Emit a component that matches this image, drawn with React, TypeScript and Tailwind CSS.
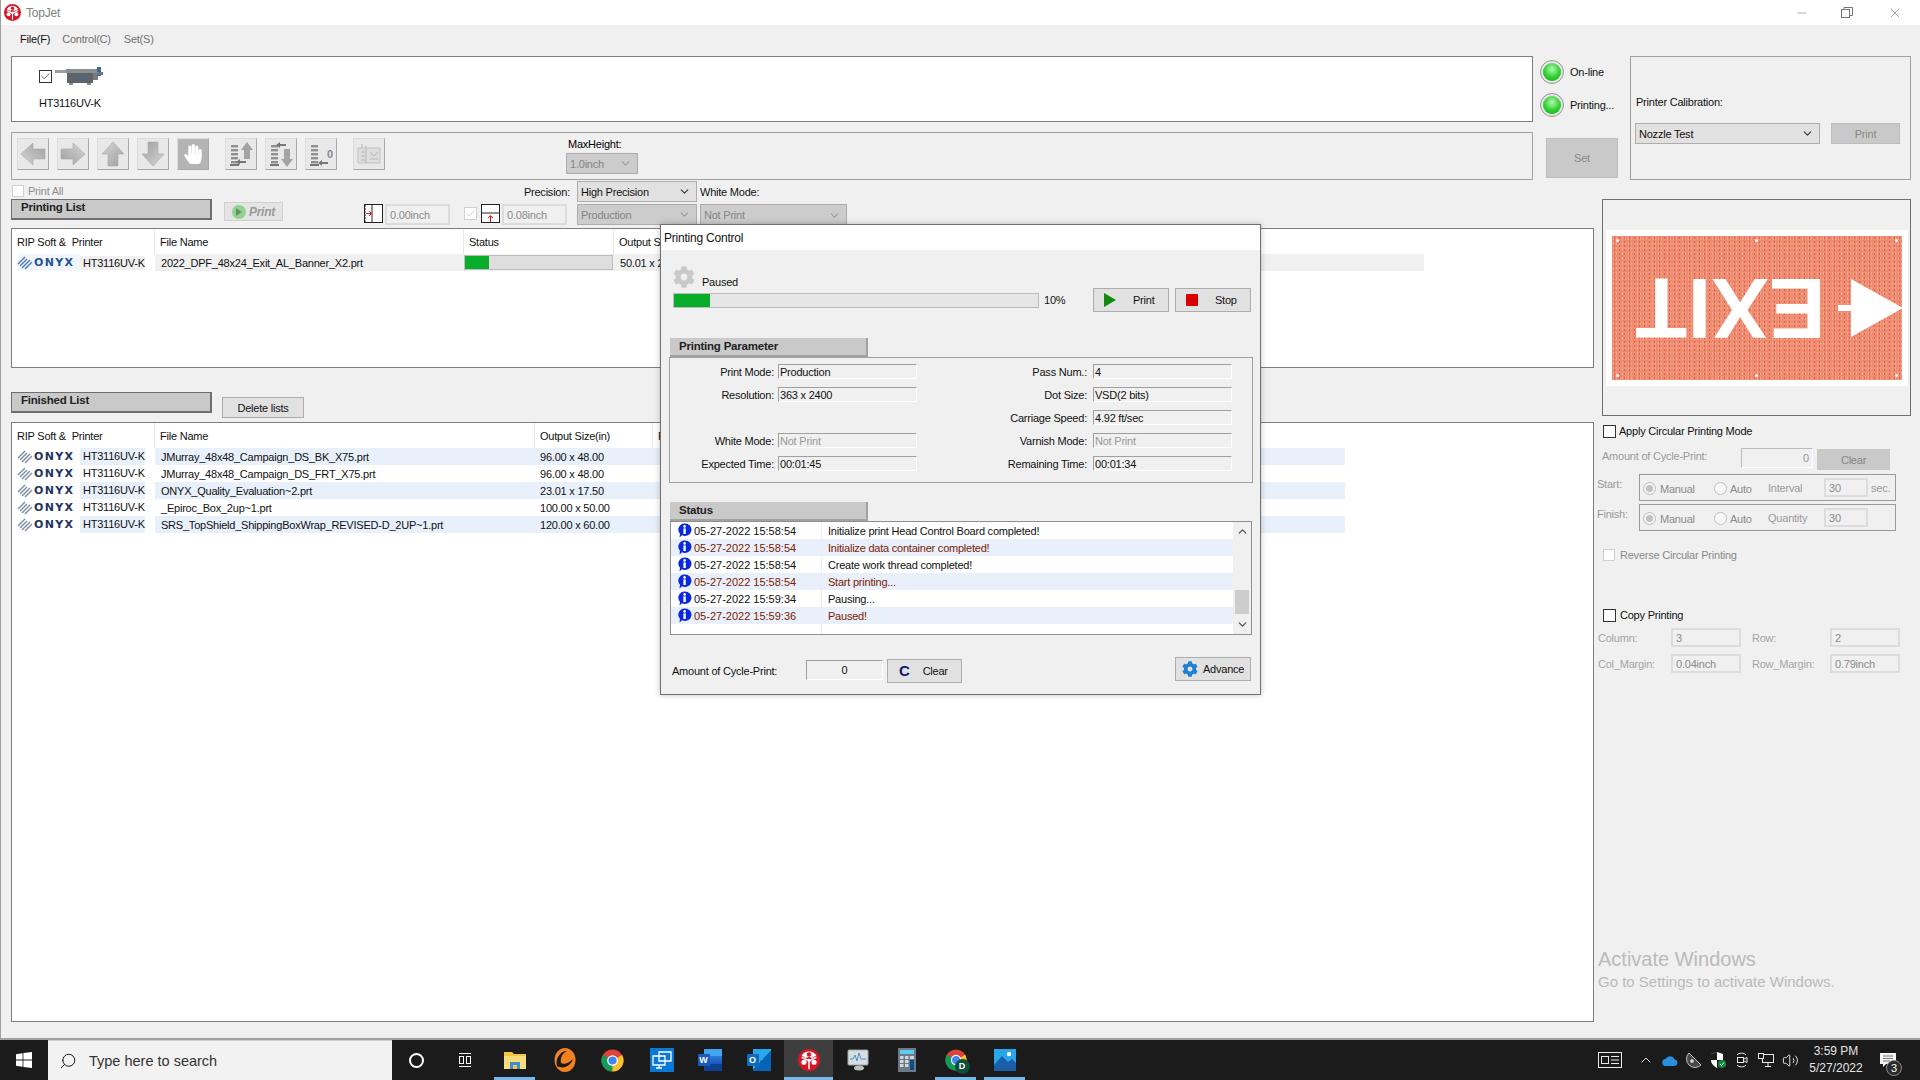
import type { ReactNode } from 'react'
import { ChevronDown, ChevronUp, Search, Minus, X, Check, Volume2 } from 'lucide-react'
import { FaCog, FaHandPaper } from 'react-icons/fa'

const finishedRows = [
  ['JMurray_48x48_Campaign_DS_BK_X75.prt', '96.00 x 48.00'],
  ['JMurray_48x48_Campaign_DS_FRT_X75.prt', '96.00 x 48.00'],
  ['ONYX_Quality_Evaluation~2.prt', '23.01 x 17.50'],
  ['_Epiroc_Box_2up~1.prt', '100.00 x 50.00'],
  ['SRS_TopShield_ShippingBoxWrap_REVISED-D_2UP~1.prt', '120.00 x 60.00'],
]

const logRows = [
  ['05-27-2022 15:58:54', 'Initialize print Head Control Board completed!'],
  ['05-27-2022 15:58:54', 'Initialize data container completed!'],
  ['05-27-2022 15:58:54', 'Create work thread completed!'],
  ['05-27-2022 15:58:54', 'Start printing...'],
  ['05-27-2022 15:59:34', 'Pausing...'],
  ['05-27-2022 15:59:36', 'Paused!'],
]

function TopJetLogo({ size }: { size: number }) {
  return (
    <svg width={size} height={size} viewBox="0 0 24 24">
      <circle cx="12" cy="12" r="12" fill="#dc1428" />
      <path d="M4 7 A9.5 9.5 0 0 1 20 7 L15 10 A4 4 0 0 0 9 10 Z" fill="#fff" />
      <path d="M12 13 L12 22 M12 13 L4 9 M12 13 L20 9" stroke="#fff" strokeWidth="1.6" />
      <circle cx="6.5" cy="14.5" r="2.8" fill="#fff" />
      <circle cx="17.5" cy="14.5" r="2.8" fill="#fff" />
      <circle cx="12" cy="6" r="2.4" fill="#dc1428" />
      <circle cx="12" cy="12.5" r="1.8" fill="#fff" />
    </svg>
  )
}

function Checkbox({ checked, disabled, size = 13 }: { checked?: boolean; disabled?: boolean; size?: number }) {
  return (
    <span
      style={{ width: size, height: size }}
      className={`flex shrink-0 items-center justify-center border bg-white ${disabled ? 'border-[#d0d0d0] bg-[#f4f4f4]' : 'border-[#333]'}`}
    >
      {checked && <Check size={size - 2} strokeWidth={1.5} className={disabled ? 'text-[#bbb]' : 'text-[#222]'} />}
    </span>
  )
}

function Radio() {
  return (
    <span className="flex h-[13px] w-[13px] shrink-0 items-center justify-center rounded-full border border-[#bcbcbc] bg-[#f4f4f4]">
      <span className="h-[7px] w-[7px] rounded-full bg-[#c0c0c0]" />
    </span>
  )
}

function Combo({ text, className, disabled }: { text: string; className: string; disabled?: boolean }) {
  return (
    <div className={`flex items-center justify-between border border-[#adadad] pl-[3px] pr-[5px] ${disabled ? 'bg-[#cccccc] text-[#858585]' : 'bg-[#e1e1e1] text-[#111]'} ${className}`}>
      <span>{text}</span>
      <ChevronDown size={13} className={disabled ? 'text-[#9a9a9a]' : 'text-[#333]'} />
    </div>
  )
}

function DisabledField({ text, className }: { text: string; className: string }) {
  return (
    <div className={`flex items-center border-2 border-[#dcdcdc] bg-[#f0f0f0] pl-[3px] text-[#8a8a8a] ${className}`}>{text}</div>
  )
}

function TabHeader({ text, className }: { text: string; className: string }) {
  return (
    <div className={`border-b-2 border-r-2 border-[#a2a2a2] bg-[#c9c9c9] pl-[9px] text-[11.5px] font-bold text-[#222] ${className}`}>
      {text}
    </div>
  )
}

function ListTab({ text }: { text: string }) {
  return (
    <div className="h-[21px] w-[201px] border border-b-2 border-r-2 border-[#6e6e6e] bg-[#c9c9c9] pl-[9px] text-[11.5px] font-bold text-[#222]">
      {text}
    </div>
  )
}

function OnyxLogo({ selected }: { selected?: boolean }) {
  return (
    <div className={`flex h-[17px] w-[63px] shrink-0 items-center ${selected ? "bg-[radial-gradient(#ffffff_0.7px,#3d86e4_0.8px)] bg-[length:2px_2px]" : ''}`}>
      <svg width="16" height="15" viewBox="0 0 16 15" className="shrink-0">
        <path d="M1 9 L8 2 M3 11 L10 4 M5 13 L13 5 M8 14 L15 7" stroke={selected ? '#4a78c0' : '#7d8aa5'} strokeWidth="1.4" />
      </svg>
      <span className={`ml-[1px] font-['DejaVu_Sans',sans-serif] text-[11px] font-bold leading-none tracking-[1.3px] ${selected ? 'text-[#25539c]' : 'text-[#1f3560]'}`}>ONYX</span>
    </div>
  )
}

function HeaderCell({ text, width }: { text: string; width: string }) {
  return <div className={`flex h-full shrink-0 items-center border-r border-[#e8e8e8] pl-[5px] ${width}`}>{text}</div>
}

// gray toolbar arrows, drawn pointing up and rotated per button
function ArrowIcon({ rotate, id }: { rotate: number; id: string }) {
  return (
    <svg width="28" height="26" viewBox="0 0 28 26" style={{ transform: `rotate(${rotate}deg)` }}>
      <defs>
        <linearGradient id={id} x1="0" x2="1" y1="0" y2="1">
          <stop offset="0" stopColor="#d6d6d6" />
          <stop offset="1" stopColor="#9e9e9e" />
        </linearGradient>
      </defs>
      <path d="M14 1 L25 13 L19 13 L19 25 L9 25 L9 13 L3 13 Z" fill={`url(#${id})`} stroke="#a8a8a8" strokeWidth="0.6" />
    </svg>
  )
}

function StackIcon({ kind }: { kind: 'up' | 'down' | 'zero' }) {
  return (
    <svg width="28" height="28" viewBox="0 0 28 28">
      {[5, 9, 13, 17, 21].map(y => (
        <rect key={y} x="4" y={y} width="7" height="2.4" fill="#8f8f8f" />
      ))}
      <rect x="3" y="24" width="9" height="2" fill="#777" />
      {kind === 'up' && (
        <>
          <path d="M20 2 L26 10 L23 10 L23 19 L17 19 L17 10 L14 10 Z" fill="#a4a4a4" />
          <path d="M9 22 L13 19 L13 21 L19 21 L19 23 L13 23 L13 25 Z" fill="#777" />
        </>
      )}
      {kind === 'down' && (
        <>
          <path d="M20 27 L26 19 L23 19 L23 9 L17 9 L17 19 L14 19 Z" fill="#a4a4a4" />
          <path d="M9 5 L13 2 L13 4 L19 4 L19 6 L13 6 L13 8 Z" fill="#777" />
        </>
      )}
      {kind === 'zero' && <path d="M11 23 L15 20 L15 22 L21 22 L21 24 L15 24 L15 26 Z" fill="#777" />}
      {kind === 'zero' && <text x="20" y="18" fontSize="11" fontWeight="700" fill="#8a8a8a">0</text>}
    </svg>
  )
}

function ToolButton({ children, className = '' }: { children: ReactNode; className?: string }) {
  return (
    <div className={`flex h-[32px] w-[32px] shrink-0 items-center justify-center border border-b-[#a9a9a9] border-l-[#dcdcdc] border-r-[#a9a9a9] border-t-[#dcdcdc] bg-[#e8e8e8] ${className}`}>
      {children}
    </div>
  )
}

function TitleBar() {
  return (
    <div className="flex h-[25px] shrink-0 items-center bg-white pl-[3px] text-[12px] text-[#808080]">
      <TopJetLogo size={17} />
      <span className="ml-[5px]">TopJet</span>
      <div className="ml-auto flex items-center text-[#767676]">
        <Minus size={14} strokeWidth={1} className="mr-[32px]" />
        <svg width="12" height="11" viewBox="0 0 12 11" className="mr-[34px]" fill="none" stroke="#767676">
          <rect x="0.5" y="2.5" width="8" height="8" />
          <path d="M3 2.5 V0.5 H11.5 V8.5 H8.5" />
        </svg>
        <X size={16} strokeWidth={1} className="mr-[17px]" />
      </div>
    </div>
  )
}

function PrinterIcon() {
  return (
    <svg width="48" height="18" viewBox="0 0 48 18">
      <rect x="0" y="3" width="14" height="3" fill="#9aa0a6" />
      <rect x="11" y="2" width="32" height="4" fill="#8a8f94" />
      <rect x="12" y="6" width="26" height="10" fill="#5f6468" />
      <rect x="22" y="11" width="8" height="1.5" fill="#3f6a96" />
      <rect x="38" y="6" width="5" height="7" fill="#777c80" />
      <rect x="42" y="0" width="4" height="9" fill="#3f6a96" />
      <rect x="42" y="5" width="6" height="3" fill="#70757a" />
      <rect x="14" y="16" width="4" height="2" fill="#888" />
      <rect x="32" y="16" width="4" height="2" fill="#888" />
    </svg>
  )
}

function Led() {
  return (
    <span className="flex h-[24px] w-[24px] items-center justify-center rounded-full border border-[#9a9a9a] bg-[#e4e4e4]">
      <span className="h-[18px] w-[18px] rounded-full bg-[radial-gradient(circle_at_50%_35%,#b4f7b4,#2cd02c_55%,#0f9f0f)]" />
    </span>
  )
}

function TopSection() {
  return (
    <div className="flex h-[124px] shrink-0 pl-[10px]">
      <div className="flex w-[1522px] shrink-0 flex-col">
        <div className="h-[66px] border border-[#7d7d85] bg-white pl-[27px] pt-[10px] text-[#111]">
          <div className="flex items-center">
            <Checkbox checked />
            <span className="ml-[3px]"><PrinterIcon /></span>
          </div>
          <div className="mt-[11px]">HT3116UV-K</div>
        </div>
        <div className="mt-[10px] flex h-[48px] border border-[#a0a0a0] pl-[5px] pt-[5px]">
          <div className="flex gap-[8px]">
            <ToolButton><ArrowIcon rotate={-90} id="a1" /></ToolButton>
            <ToolButton><ArrowIcon rotate={90} id="a2" /></ToolButton>
            <ToolButton><ArrowIcon rotate={0} id="a3" /></ToolButton>
            <ToolButton><ArrowIcon rotate={180} id="a4" /></ToolButton>
            <ToolButton className="!bg-[#b4b4b4]"><FaHandPaper size={20} className="text-white" /></ToolButton>
          </div>
          <div className="ml-[16px] flex gap-[8px]">
            <ToolButton><StackIcon kind="up" /></ToolButton>
            <ToolButton><StackIcon kind="down" /></ToolButton>
            <ToolButton><StackIcon kind="zero" /></ToolButton>
          </div>
          <ToolButton className="ml-[16px]">
            <svg width="26" height="24" viewBox="0 0 26 24" fill="none" stroke="#c2c2c2">
              <path d="M2 6 H24 V21 H2 Z" fill="#dedede" />
              <path d="M6 2 V6 M10 4 V21 M5 10 H9 M5 14 H9 M5 18 H9 M14 10 L18 14 L22 10 M14 17 H22" strokeWidth="1.4" />
            </svg>
          </ToolButton>
          <div className="ml-[181px] flex flex-col">
            <span className="ml-[2px] leading-[13px]">MaxHeight:</span>
            <Combo text="1.0inch" disabled className="mt-[2px] h-[21px] w-[72px]" />
          </div>
        </div>
      </div>

      <div className="ml-[7px] flex w-[90px] shrink-0 flex-col text-[#111]">
        <div className="mt-[4px] flex items-center">
          <Led />
          <span className="ml-[6px]">On-line</span>
        </div>
        <div className="mt-[9px] flex items-center">
          <Led />
          <span className="ml-[6px]">Printing...</span>
        </div>
        <div className="ml-[6px] mt-[21px] flex h-[40px] w-[72px] items-center justify-center border border-[#bdbdbd] bg-[#c9c9c9] text-[#8a8a8a]">Set</div>
      </div>

      <div className="flex h-[124px] w-[281px] shrink-0 flex-col border border-[#a0a0a0] pl-[4px]">
        <div className="ml-[1px] mt-[39px] leading-[13px] text-[#111]">Printer Calibration:</div>
        <div className="mt-[14px] flex items-start">
          <Combo text="Nozzle Test" className="h-[21px] w-[185px]" />
          <div className="ml-[11px] flex h-[21px] w-[69px] items-center justify-center border border-[#bdbdbd] bg-[#c9c9c9] text-[#8a8a8a]">Print</div>
        </div>
      </div>
    </div>
  )
}

function ControlStrip() {
  return (
    <div className="flex h-[48px] shrink-0">
      <div className="flex w-[201px] shrink-0 flex-col">
        <div className="ml-[1px] mt-[5px] flex h-[12px] items-center text-[#8d8d8d]">
          <Checkbox disabled size={12} />
          <span className="ml-[4px]">Print All</span>
        </div>
        <div className="mt-[2px]"><ListTab text="Printing List" /></div>
      </div>

      <div className="ml-[12px] mt-[22px] flex h-[19px] w-[59px] shrink-0 items-center justify-center border border-[#cfcfcf] bg-[#e4e4e4] text-[#9a9a9a]">
        <span className="flex h-[14px] w-[14px] items-center justify-center rounded-full bg-[#8fd38f]">
          <span className="ml-[1px] h-0 w-0 border-y-[4px] border-l-[6px] border-y-transparent border-l-[#6a8f6a]" />
        </span>
        <span className="ml-[3px] text-[12px] font-bold italic">Print</span>
      </div>

      <div className="ml-[81px] mt-[1px] flex w-[333px] shrink-0 flex-col">
        <div className="flex h-[21px] items-center justify-end">
          <span className="text-[#111]">Precision:</span>
          <Combo text="High Precision" className="ml-[7px] h-[21px] w-[120px]" />
        </div>
        <div className="mt-[2px] flex h-[21px] items-start">
          <svg width="19" height="20" viewBox="0 0 19 20" className="shrink-0">
            <rect x="0.5" y="0.5" width="18" height="18" fill="#fff" stroke="#222" />
            <path d="M8 1 V19" stroke="#222" />
            <path d="M1 1 V19" stroke="#222" strokeDasharray="2 1" />
            <path d="M2 9.5 H7 M5 7 L7.5 9.5 L5 12" stroke="#e01414" fill="none" />
          </svg>
          <DisabledField text="0.00inch" className="ml-[2px] h-[21px] w-[65px]" />
          <span className="ml-[14px] mt-[3px]"><Checkbox checked disabled /></span>
          <svg width="19" height="20" viewBox="0 0 19 20" className="ml-[4px] shrink-0">
            <rect x="0.5" y="0.5" width="18" height="18" fill="#fff" stroke="#222" />
            <path d="M1 9 H18" stroke="#222" />
            <path d="M9.5 18 V12 M7 14 L9.5 11.5 L12 14" stroke="#e01414" fill="none" />
          </svg>
          <DisabledField text="0.08inch" className="ml-[2px] h-[21px] w-[65px]" />
          <Combo text="Production" disabled className="ml-[10px] h-[21px] w-[120px]" />
        </div>
      </div>

      <div className="ml-[3px] mt-[1px] flex w-[147px] shrink-0 flex-col">
        <span className="flex h-[21px] items-center text-[#111]">White Mode:</span>
        <Combo text="Not Print" disabled className="mt-[2px] h-[22px] w-[147px]" />
      </div>
    </div>
  )
}

function PrintingTable() {
  return (
    <div className="h-[140px] w-[1583px] shrink-0 border border-[#7d7d85] bg-white text-[#111]">
      <div className="flex h-[25px] items-center">
        <HeaderCell text={'RIP Soft &\u00a0 Printer'} width="w-[143px]" />
        <HeaderCell text="File Name" width="w-[309px]" />
        <HeaderCell text="Status" width="w-[150px]" />
        <div className="pl-[5px]">Output Size(in)</div>
      </div>
      <div className="flex h-[17px] w-[1412px] items-center bg-[#f0f0f0]">
        <div className="flex w-[143px] shrink-0 items-center bg-white pl-[5px]">
          <OnyxLogo selected />
          <span className="bg-[#f0f0f0] pl-[3px]">HT3116UV-K</span>
        </div>
        <span className="w-[309px] shrink-0 pl-[6px]">2022_DPF_48x24_Exit_AL_Banner_X2.prt</span>
        <div className="h-[15px] w-[149px] shrink-0 border border-[#bdbdbd] bg-[#dedede]">
          <div className="h-full w-[16%] bg-[#08ad2c]" />
        </div>
        <span className="pl-[7px]">50.01 x 24.00</span>
      </div>
    </div>
  )
}

function FinishedTable() {
  return (
    <div className="mt-[4px] h-[600px] w-[1583px] shrink-0 border border-[#7d7d85] bg-white text-[#111]">
      <div className="flex h-[25px] items-center">
        <HeaderCell text={'RIP Soft &\u00a0 Printer'} width="w-[143px]" />
        <HeaderCell text="File Name" width="w-[380px]" />
        <HeaderCell text="Output Size(in)" width="w-[118px]" />
        <div className="pl-[5px]">P</div>
      </div>
      {finishedRows.map((row, i) => (
        <div key={row[0]} className="flex h-[17px] w-[1333px] items-center">
          <div className="flex w-[143px] shrink-0 items-center pl-[5px]">
            <OnyxLogo />
            <span className={`h-[17px] pl-[3px] leading-[17px] ${i % 2 === 0 ? 'bg-[#e8f0fb]' : ''}`}>HT3116UV-K</span>
          </div>
          <div className={`flex h-[17px] flex-1 items-center ${i % 2 === 0 ? 'bg-[#e8f0fb]' : ''}`}>
            <span className="w-[385px] shrink-0 pl-[6px]">{row[0]}</span>
            <span>{row[1]}</span>
          </div>
        </div>
      ))}
    </div>
  )
}

function ExitPreview() {
  return (
    <div className="ml-[8px] mt-[19px] flex h-[217px] w-[309px] shrink-0 items-center justify-center border border-[#6e6e6e]">
      <div className="flex h-[156px] w-[302px] items-center justify-center bg-white">
        <div className="relative flex h-[144px] w-[290px] items-center bg-[#ee8d6e] bg-[radial-gradient(#e35a62_0.8px,transparent_1px),radial-gradient(#f2a58a_0.8px,transparent_1px)] bg-[length:5px_4px,3px_5px] pl-[23px] pt-[1px]">
          <span className="rotate-180 text-[85px] font-bold leading-none tracking-[0.4px] text-white">EXIT</span>
          <svg width="66" height="60" viewBox="0 0 66 60" className="ml-[13px] shrink-0" fill="#fff">
            <path d="M13 1 L65 30 L13 59 Z" />
            <rect x="0" y="27" width="14" height="6" />
          </svg>
          <span className="absolute left-[4px] top-[3px] h-[3px] w-[3px] rounded-full bg-white" />
          <span className="absolute left-[143px] top-[3px] h-[3px] w-[3px] rounded-full bg-white" />
          <span className="absolute right-[4px] top-[3px] h-[3px] w-[3px] rounded-full bg-white" />
          <span className="absolute bottom-[3px] left-[4px] h-[3px] w-[3px] rounded-full bg-white" />
          <span className="absolute bottom-[3px] left-[143px] h-[3px] w-[3px] rounded-full bg-white" />
          <span className="absolute bottom-[3px] right-[4px] h-[3px] w-[3px] rounded-full bg-white" />
        </div>
      </div>
    </div>
  )
}

function CycleBox({ label, word, value, unit }: { label: string; word: string; value: string; unit?: string }) {
  return (
    <div className="flex h-[27px] shrink-0 text-[#9a9a9a]">
      <span className="w-[45px] shrink-0 pl-[3px] pt-[3px]">{label}</span>
      <div className="flex h-[27px] w-[257px] shrink-0 items-center border border-[#9a9a9a] pl-[3px]">
        <div className="mt-[2px] flex w-[71px] shrink-0 items-center">
          <Radio />
          <span className="ml-[4px] text-[#8a8a8a]">Manual</span>
        </div>
        <div className="mt-[2px] flex w-[54px] shrink-0 items-center">
          <span className="h-[13px] w-[13px] rounded-full border border-[#bcbcbc] bg-[#f8f8f8]" />
          <span className="ml-[3px] text-[#8a8a8a]">Auto</span>
        </div>
        <span className="w-[56px] shrink-0">{word}</span>
        <DisabledField text={value} className="h-[19px] w-[44px]" />
        {unit && <span className="ml-[3px]">{unit}</span>}
      </div>
    </div>
  )
}

function RightPanel() {
  return (
    <div className="flex w-[317px] shrink-0 flex-col">
      <ExitPreview />

      <div className="ml-[9px] mt-[9px] flex h-[12px] items-center text-[#111]">
        <Checkbox />
        <span className="ml-[3px]">Apply Circular Printing Mode</span>
      </div>

      <div className="mt-[11px] flex h-[22px] shrink-0 items-start text-[#9a9a9a]">
        <span className="ml-[8px] mt-[1px] w-[139px] shrink-0">Amount of Cycle-Print:</span>
        <div className="flex h-[20px] w-[72px] shrink-0 items-center justify-end border border-[#bbb] border-b-white border-r-white pr-[3px]">0</div>
        <div className="ml-[4px] mt-[1px] flex h-[21px] w-[73px] items-center justify-center bg-[#c9c9c9] text-[#858585]">Clear</div>
      </div>

      <div className="mt-[4px]"><CycleBox label="Start:" word="Interval" value="30" unit="sec." /></div>
      <div className="mt-[3px]"><CycleBox label="Finish:" word="Quantity" value="30" /></div>

      <div className="ml-[9px] mt-[18px] flex h-[12px] items-center text-[#8a8a8a]">
        <Checkbox disabled size={12} />
        <span className="ml-[5px]">Reverse Circular Printing</span>
      </div>

      <div className="ml-[9px] mt-[48px] flex h-[12px] items-center text-[#111]">
        <Checkbox />
        <span className="ml-[4px]">Copy Printing</span>
      </div>

      <div className="mt-[7px] flex h-[19px] items-center pl-[4px] text-[#a5a5a5]">
        <span className="w-[73px] shrink-0">Column:</span>
        <DisabledField text="3" className="h-[19px] w-[70px]" />
        <span className="ml-[11px] w-[78px] shrink-0">Row:</span>
        <DisabledField text="2" className="h-[19px] w-[70px]" />
      </div>
      <div className="mt-[7px] flex h-[19px] items-center pl-[4px] text-[#a5a5a5]">
        <span className="w-[73px] shrink-0">Col_Margin:</span>
        <DisabledField text="0.04inch" className="h-[19px] w-[70px]" />
        <span className="ml-[11px] w-[78px] shrink-0">Row_Margin:</span>
        <DisabledField text="0.79inch" className="h-[19px] w-[70px]" />
      </div>

      <div className="ml-[4px] mt-[274px] text-[20px] leading-[24px] tracking-normal text-[#bababa]">Activate Windows</div>
      <div className="ml-[4px] text-[15px] leading-[21px] tracking-normal text-[#bababa]">Go to Settings to activate Windows.</div>
    </div>
  )
}

function ParamField({ text, muted }: { text: string; muted?: boolean }) {
  return (
    <div className={`flex h-[15px] w-[139px] shrink-0 items-center border border-[#a0a0a0] border-b-white border-r-white pl-[1px] ${muted ? 'text-[#9a9a9a]' : 'text-[#111]'}`}>
      {text}
    </div>
  )
}

function ParamRow({ left, right }: { left?: [string, string, boolean?]; right: [string, string, boolean?] }) {
  return (
    <div className="flex h-[15px] items-center">
      <div className="flex w-[248px] shrink-0 items-center">
        {left && (
          <>
            <span className="w-[104px] shrink-0 text-right">{left[0]}</span>
            <span className="ml-[4px]"><ParamField text={left[1]} muted={left[2]} /></span>
          </>
        )}
      </div>
      <span className="ml-[19px] w-[150px] shrink-0 text-right">{right[0]}</span>
      <span className="ml-[6px]"><ParamField text={right[1]} muted={right[2]} /></span>
    </div>
  )
}

function InfoIcon() {
  return (
    <svg width="15" height="15" viewBox="0 0 15 15" className="shrink-0">
      <path d="M7.5 0.5 A6.5 6.2 0 1 1 5 12.2 L2.5 14.5 L3 10.8 A6.5 6.2 0 0 1 7.5 0.5 Z" fill="#0a28e0" />
      <circle cx="7.6" cy="3.4" r="1.3" fill="#fff" />
      <rect x="6.4" y="5.4" width="2.4" height="5.6" fill="#fff" />
    </svg>
  )
}

function PrintingControl() {
  return (
    <div className="absolute left-[660px] top-[224px] flex h-[471px] w-[601px] flex-col border border-[#707070] bg-[#f0f0f0] text-[#111] shadow-[0_0_6px_rgba(0,0,0,0.25)]">
      <div className="flex h-[25px] shrink-0 items-center bg-white pl-[3px] text-[12px]">Printing Control</div>

      <div className="ml-[12px] mt-[16px] flex h-[22px] shrink-0 items-end">
        <FaCog size={22} className="text-[#c9c9c9]" />
        <span className="ml-[7px] translate-y-[1px] leading-[13px]">Paused</span>
      </div>
      <div className="ml-[12px] mr-[9px] flex h-[24px] shrink-0 items-center">
        <div className="h-[15px] w-[366px] border border-[#bcbcbc] bg-[#e6e6e6]">
          <div className="h-full w-[10%] bg-[#08ad2c]" />
        </div>
        <span className="ml-[5px]">10%</span>
        <div className="ml-auto flex gap-[6px]">
          <div className="flex h-[24px] w-[76px] items-center border border-[#adadad] bg-[#e1e1e1] pl-[10px]">
            <span className="h-0 w-0 border-y-[7px] border-l-[12px] border-y-transparent border-l-[#118a11]" />
            <span className="ml-[17px]">Print</span>
          </div>
          <div className="flex h-[24px] w-[76px] items-center border border-[#adadad] bg-[#e1e1e1] pl-[10px]">
            <span className="h-[12px] w-[12px] rounded-[1px] bg-[#d90000]" />
            <span className="ml-[17px]">Stop</span>
          </div>
        </div>
      </div>

      <TabHeader text="Printing Parameter" className="ml-[9px] mt-[26px] h-[19px] w-[198px] shrink-0 leading-[17px]" />
      <div className="ml-[8px] flex h-[126px] w-[584px] shrink-0 flex-col gap-[8px] border border-[#a0a0a0] pt-[6px]">
        <ParamRow left={['Print Mode:', 'Production']} right={['Pass Num.:', '4']} />
        <ParamRow left={['Resolution:', '363 x 2400']} right={['Dot Size:', 'VSD(2 bits)']} />
        <ParamRow right={['Carriage Speed:', '4.92 ft/sec']} />
        <ParamRow left={['White Mode:', 'Not Print', true]} right={['Varnish Mode:', 'Not Print', true]} />
        <ParamRow left={['Expected Time:', '00:01:45']} right={['Remaining Time:', '00:01:34']} />
      </div>

      <TabHeader text="Status" className="ml-[9px] mt-[19px] h-[19px] w-[198px] shrink-0 leading-[17px]" />
      <div className="ml-[9px] flex h-[114px] w-[582px] shrink-0 border border-[#8f8f8f] bg-white">
        <div className="flex-1">
          {logRows.map((row, i) => (
            <div key={i} className={`flex h-[17px] items-center ${i % 2 === 1 ? 'bg-[#e9f0fb] text-[#7a2200]' : ''}`}>
              <div className="flex h-full w-[151px] shrink-0 items-center border-r border-[#eeeeee] pl-[6px]">
                <InfoIcon />
                <span className="ml-[2px] tracking-normal">{row[0]}</span>
              </div>
              <span className="pl-[6px]">{row[1]}</span>
            </div>
          ))}
          <div className="h-[10px] w-[151px] border-r border-[#eeeeee]" />
        </div>
        <div className="flex w-[18px] shrink-0 flex-col items-center bg-[#f0f0f0] py-[3px] text-[#555]">
          <ChevronUp size={13} strokeWidth={2.5} />
          <div className="mt-[52px] h-[24px] w-[14px] bg-[#cdcdcd]" />
          <ChevronDown size={13} strokeWidth={2.5} className="mt-auto" />
        </div>
      </div>

      <div className="ml-[11px] mr-[9px] mt-[22px] flex h-[26px] shrink-0 items-start">
        <span className="mt-[7px] w-[134px] shrink-0">Amount of Cycle-Print:</span>
        <div className="mt-[3px] flex h-[20px] w-[77px] shrink-0 items-center justify-center border border-[#a0a0a0] border-b-white border-r-white">0</div>
        <div className="ml-[4px] mt-[2px] flex h-[24px] w-[75px] shrink-0 items-center border border-[#adadad] bg-[#e1e1e1] pl-[11px]">
          <span className="text-[15px] font-bold text-[#14147a]">C</span>
          <span className="ml-[13px]">Clear</span>
        </div>
        <div className="ml-auto flex h-[24px] w-[76px] items-center border border-[#adadad] bg-[#e1e1e1] pl-[6px]">
          <FaCog size={16} className="text-[#1f7fd2]" />
          <span className="ml-[5px]">Advance</span>
        </div>
      </div>
    </div>
  )
}

function ChromeIcon({ size }: { size: number }) {
  return (
    <svg width={size} height={size} viewBox="0 0 24 24">
      <circle cx="12" cy="12" r="11.5" fill="#db4437" />
      <path d="M12 23.5 A11.5 11.5 0 0 1 2.04 6.25 L12 12 Z" fill="#0f9d58" />
      <path d="M12 23.5 A11.5 11.5 0 0 0 21.96 6.25 L12 12 Z" fill="#fbc02d" />
      <circle cx="12" cy="12" r="5.6" fill="#fff" />
      <circle cx="12" cy="12" r="4.3" fill="#4285f4" />
    </svg>
  )
}

function TaskCell({ children, running, active }: { children: ReactNode; running?: boolean; active?: boolean }) {
  return (
    <div className={`h-[40px] w-[49px] shrink-0 ${active ? 'bg-[#3e3e3e] px-0' : 'px-[4px]'}`}>
      <div className={`flex h-full items-center justify-center ${running ? 'border-b-[3px] border-[#76b9ed] pt-[3px]' : ''}`}>{children}</div>
    </div>
  )
}

function Taskbar() {
  return (
    <div className="flex h-[40px] shrink-0 items-center bg-[#1b1b1b] tracking-normal text-white">
      <div className="flex h-full w-[48px] shrink-0 items-center justify-center">
        <svg width="16" height="16" viewBox="0 0 16 16" fill="#fff">
          <path d="M0 2.2 L6.6 1.2 V7.6 H0 Z M7.4 1.1 L16 0 V7.6 H7.4 Z M0 8.4 H6.6 V14.8 L0 13.8 Z M7.4 8.4 H16 V16 L7.4 14.9 Z" />
        </svg>
      </div>
      <div className="flex h-full w-[344px] shrink-0 items-center border-t border-[#d0d0d0] bg-[#f2f2f2] pl-[11px] text-[#333]">
        <Search size={18} strokeWidth={1.3} className="-scale-x-100 text-[#111]" />
        <span className="ml-[12px] text-[14.5px]">Type here to search</span>
      </div>

      <TaskCell><span className="h-[15px] w-[15px] rounded-full border-[2.5px] border-white" /></TaskCell>
      <TaskCell>
        <svg width="16" height="16" viewBox="0 0 16 16" fill="none" stroke="#fff" className="-translate-x-[1px]">
          <path d="M2 1.5 H14 M2 14.5 H14" />
          <rect x="2.5" y="4.5" width="4" height="7" />
          <rect x="9.5" y="4.5" width="4" height="7" />
        </svg>
      </TaskCell>
      <TaskCell running>
        <svg width="24" height="22" viewBox="0 0 24 22">
          <path d="M1 3 H9 L11 5 H23 V20 H1 Z" fill="#f4c542" />
          <path d="M1 7 H23 V20 H1 Z" fill="#fbdc7a" />
          <rect x="7" y="13" width="10" height="7" fill="#3c8ed8" />
          <rect x="10" y="16" width="4" height="4" fill="#f4c542" />
        </svg>
      </TaskCell>
      <TaskCell>
        <svg width="24" height="26" viewBox="0 0 24 26">
          <ellipse cx="13" cy="13" rx="10.5" ry="12" fill="#f58220" />
          <path d="M5 19 C3 12 8 4 15 4 C10 6 8 12 9 16 C12 18 17 16 21 12 C19 18 12 23 5 19 Z" fill="#1b1b1b" />
        </svg>
      </TaskCell>
      <TaskCell><ChromeIcon size={23} /></TaskCell>
      <TaskCell>
        <svg width="24" height="24" viewBox="0 0 24 24">
          <rect width="24" height="24" fill="#0a78d7" />
          <path d="M9 4 H21 V13 H9 Z M3 8 H15 V17 H3 Z M9 17 V20 M6 20 H12" fill="#0a78d7" stroke="#fff" strokeWidth="1.3" />
        </svg>
      </TaskCell>
      <TaskCell>
        <div className="relative ml-[4px] h-[22px] w-[18px] bg-[linear-gradient(#41a5ee_33%,#2b7cd3_33%,#185abd_66%,#103f91_66%)]">
          <span className="absolute -left-[6px] top-[5px] flex h-[12px] w-[12px] items-center justify-center bg-[#185abd] text-[9px] font-bold leading-none">W</span>
        </div>
      </TaskCell>
      <TaskCell>
        <div className="relative ml-[4px] h-[22px] w-[18px] bg-[linear-gradient(135deg,#28a8ea_50%,#0364b8_50%)]">
          <span className="absolute -left-[6px] top-[5px] flex h-[12px] w-[12px] items-center justify-center bg-[#0f6cbd] text-[9px] font-bold leading-none">O</span>
        </div>
      </TaskCell>
      <TaskCell running active><TopJetLogo size={22} /></TaskCell>
      <TaskCell>
        <svg width="24" height="24" viewBox="0 0 24 24">
          <rect x="2" y="2" width="20" height="15" rx="1" fill="#d8dde0" stroke="#9aa" />
          <path d="M4 11 L7 11 L9 7 L11 13 L13 5 L15 11 L20 11" stroke="#4a90c8" fill="none" />
          <ellipse cx="13" cy="20" rx="5" ry="2.5" fill="#c0c0c0" />
        </svg>
      </TaskCell>
      <TaskCell>
        <svg width="18" height="24" viewBox="0 0 18 24">
          <rect width="18" height="24" fill="#6c7a86" />
          <rect x="2" y="2" width="14" height="4" fill="#5ecbf1" />
          {[8, 12, 16].map(y => [2, 7].map(x => <rect key={`${x}-${y}`} x={x} y={y} width="3.5" height="3" fill="#cfd8dc" />))}
          <rect x="12" y="12" width="4" height="10" fill="#0f4c8a" />
          <rect x="12" y="8" width="4" height="3" fill="#cfd8dc" />
        </svg>
      </TaskCell>
      <TaskCell running>
        <div className="relative">
          <ChromeIcon size={22} />
          <span className="absolute -bottom-[3px] -right-[3px] flex h-[15px] w-[15px] items-center justify-center rounded-full bg-[#0b4f3c] text-[9px] font-bold leading-none">D</span>
        </div>
      </TaskCell>
      <TaskCell running>
        <svg width="22" height="22" viewBox="0 0 22 22">
          <rect width="22" height="22" fill="#28a8ea" />
          <circle cx="15" cy="5" r="2.2" fill="#fff" />
          <path d="M0 16 L8 7 L14 13 L18 10 L22 14 V22 H0 Z" fill="#1a5fa8" />
        </svg>
      </TaskCell>

      <div className="ml-auto flex h-full items-center">
        <svg width="24" height="16" viewBox="0 0 24 16" fill="none" stroke="#e8e8e8" className="mr-[12px]">
          <rect x="0.5" y="0.5" width="23" height="15" />
          <rect x="3.5" y="4.5" width="7" height="7" />
          <path d="M13 4.5 H21 M13 8 H21 M13 11.5 H21" />
        </svg>
        <div className="flex w-[24px] justify-center">
          <ChevronUp size={16} strokeWidth={1.3} />
        </div>
        <div className="flex w-[24px] justify-center">
          <svg width="17" height="11" viewBox="0 0 17 11" fill="#2a8ee0">
            <path d="M4 11 A3.5 3.5 0 0 1 3.5 4 A5 5 0 0 1 12.5 4.2 A3.5 3.5 0 0 1 13 11 Z" />
          </svg>
        </div>
        <div className="flex w-[24px] justify-center">
          <svg width="16" height="16" viewBox="0 0 16 16" fill="none" stroke="#bdbdbd">
            <path d="M3 1 L15 13 A8 8 0 0 1 3 1 Z" fill="#4a4a4a" />
            <circle cx="6" cy="9" r="1.5" fill="#ddd" />
          </svg>
        </div>
        <div className="flex w-[24px] justify-center">
          <svg width="16" height="18" viewBox="0 0 16 18">
            <path d="M7 1 L1 3 V9 C1 13 4 15 7 17 C10 15 13 13 13 9 V3 Z" fill="#fff" />
            <path d="M7 1 V9 H1 V3 Z M7 9 H13 C13 13 10 15 7 17 Z" fill="#1b1b1b" />
            <circle cx="12" cy="13" r="4" fill="#10893e" />
            <path d="M10 13 L11.5 14.5 L14 11.5" stroke="#fff" fill="none" />
          </svg>
        </div>
        <div className="flex w-[24px] justify-center">
          <svg width="12" height="16" viewBox="0 0 12 16" fill="none" stroke="#e8e8e8">
            <path d="M1 3 C3 0.5 8 0.5 10 3 M1 13 C3 15.5 8 15.5 10 13" />
            <rect x="1.5" y="5.5" width="6" height="5" />
            <path d="M8 7 L11 5.5 V10.5 L8 9" />
          </svg>
        </div>
        <div className="flex w-[24px] justify-center">
          <svg width="16" height="15" viewBox="0 0 16 15" fill="none" stroke="#e8e8e8">
            <rect x="4.5" y="1.5" width="11" height="8" />
            <rect x="0.5" y="0.5" width="5" height="5" fill="#1b1b1b" />
            <path d="M10 10 V13 M7 13.5 H13" />
          </svg>
        </div>
        <div className="flex w-[24px] justify-center">
          <Volume2 size={17} strokeWidth={1.2} />
        </div>
        <div className="flex w-[68px] flex-col items-center text-[12px] leading-[17px] text-[#e4e4e4]">
          <span>3:59 PM</span>
          <span>5/27/2022</span>
        </div>
        <div className="relative flex w-[50px] items-center pl-[10px]">
          <svg width="16" height="15" viewBox="0 0 16 15">
            <path d="M0 0 H16 V11 H6 L3 14 V11 H0 Z" fill="#f4f4f4" />
            <path d="M3 3 H13 M3 5.5 H13 M3 8 H10" stroke="#555" strokeWidth="0.8" />
          </svg>
          <span className="absolute left-[16px] top-[7px] flex h-[16px] w-[16px] items-center justify-center rounded-full border border-[#888] bg-[#2b2b2b] text-[11px]">3</span>
        </div>
      </div>
    </div>
  )
}

export default function App() {
  return (
    <div className="relative flex h-[1080px] w-[1920px] flex-col overflow-hidden bg-[#f0f0f0] font-['Liberation_Sans',sans-serif] text-[11px] leading-[14px] tracking-[-0.22px]">
      <div className="flex h-[1040px] shrink-0 flex-col border-b-2 border-l border-[#a0a0a0]">
        <TitleBar />
        <div className="flex h-[31px] shrink-0 items-center pb-[4px] pl-[19px] text-[#707070]">
          <span className="text-[#111]">File(F)</span>
          <span className="ml-[12px]">Control(C)</span>
          <span className="ml-[13px]">Set(S)</span>
        </div>
        <TopSection />
        <div className="flex pl-[10px]">
          <div className="flex w-[1583px] shrink-0 flex-col">
            <ControlStrip />
            <PrintingTable />
            <div className="mt-[24px] flex h-[26px] shrink-0 items-start">
              <ListTab text="Finished List" />
              <div className="ml-[10px] mt-[5px] flex h-[21px] w-[82px] items-center justify-center border border-[#adadad] bg-[#e1e1e1] text-[#111]">Delete lists</div>
            </div>
            <FinishedTable />
          </div>
          <RightPanel />
        </div>
      </div>
      <Taskbar />
      <PrintingControl />
    </div>
  )
}
